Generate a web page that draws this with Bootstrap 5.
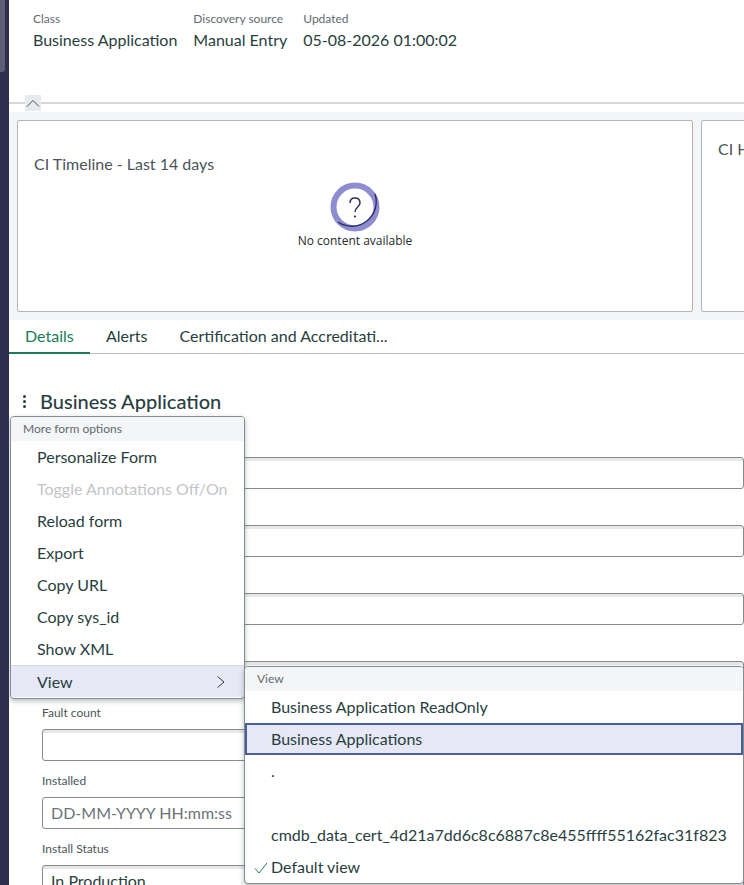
<!DOCTYPE html>
<html lang="en">
<head>
  <meta charset="UTF-8">
  <title>Business Application</title>
  <meta name="viewport" content="width=device-width, initial-scale=1" />
  <link href="https://cdn.jsdelivr.net/npm/bootstrap@5.3.0/dist/css/bootstrap.min.css" rel="stylesheet">
  <style>
    html, body { height: 885px; overflow: hidden; }
    body { font-family: "Lato", "Liberation Sans", sans-serif; color: #293e40; background: #fff; }
    .app-shell { position: relative; height: 885px; overflow: hidden; }
    .side-rail { width: 9px; flex: none; background: #2e2e4f; }
    .rail-thumb { width: 5px; height: 72px; background: #5d5d75; border-radius: 0 0 3px 0; }
    .main-area { flex: 1 1 auto; min-width: 0; overflow: hidden; }
    .summary-head { height: 102px; padding: 11px 0 0 24px; gap: 16px; }
    .sum-label { font-size: 12px; line-height: 16px; color: #5f6b70; }
    .sum-value { font-size: 16px; line-height: 24px; color: #293e40; margin-top: 1px; }
    .collapse-line { height: 10px; border-top: 2px solid #d5d8da; position: relative; }
    .collapse-btn { position: absolute; left: 16px; top: -9px; width: 16px; height: 16px; background: #e8e9ec; display: flex; }
    .widget-band { background: #f4f5f7; height: 208px; padding: 8px 0 0 8px; gap: 8px; }
    .widget-box { flex: none; width: 676px; height: 192px; background: #fff; border: 1px solid #b1b5b8; border-radius: 2px; padding: 33px 16px 0; position: relative; }
    .widget-title { font-size: 16px; line-height: 20px; color: #4a5558; white-space: nowrap; }
    .no-content { font-size: 12px; line-height: 16px; color: #1f2a2c; font-family: "Open Sans", sans-serif; margin-top: 9px; }
    .tab-strip { height: 34px; border-bottom: 1px solid #bcc0c3; }
    .tab-item { font-size: 16px; line-height: 32px; color: #293e40; padding: 0 16px; white-space: nowrap; height: 34px; }
    .tab-item.is-active { color: #1b7a5a; border-bottom: 2px solid #1b7a5a; width: 81px; }
    .form-head { padding: 33px 0 0 14px; gap: 14px; height: 78px; }
    .form-title { font-size: 20px; line-height: 28px; font-weight: 500; color: #293e40; margin: 0; white-space: nowrap; }
    .dot-stack { display: flex; flex-direction: column; gap: 2px; padding-top: 8px; }
    .dot-stack i { width: 3px; height: 3px; background: #293e40; border-radius: 50%; display: block; }
    .form-body { padding: 0 0 0 33px; }
    .field-row { height: 68px; position: relative; }
    .field-label { position: absolute; left: 0; top: -24px; font-size: 12px; line-height: 16px; color: #4a5558; }
    .field-box { height: 32px; border: 1px solid #868b8e; border-radius: 3px; font-size: 16px; line-height: 30px; padding: 0 8px; color: #293e40; background: #fff; }
    .field-box.is-ro { background: linear-gradient(#e6e8ea 3px, #fff 3px); }
    .field-box.is-hint { color: #6b7376; box-shadow: none; }
    .fly-menu { position: absolute; background: #fff; border: 1px solid #868b8e; border-radius: 4px; box-shadow: 0 2px 5px rgba(41,62,64,.35); overflow: hidden; }
    .menu-main { left: 10px; top: 416px; width: 235px; height: 283px; }
    .menu-view { left: 244px; top: 666px; width: 500px; height: 218px; }
    .menu-cap { background: #f4f5f7; height: 24px; font-size: 12px; line-height: 24px; color: #5f6b70; padding-left: 12px; }
    .menu-row { height: 32px; font-size: 16px; line-height: 32px; color: #293e40; padding-left: 26px; white-space: nowrap; position: relative; }
    .menu-row.is-off { color: #c2c5c7; }
    .menu-row.is-open { background: #e6e8f5; border-top: 1px solid #d5d8da; }
    .menu-row.is-focus { background: #e6e8f5; outline: 2px solid #4a5f9a; outline-offset: -2px; }
    .menu-view .menu-row { padding-left: 26px; }
    .row-mark { position: absolute; }
  </style>
</head>
<body>
  <div class="app-shell d-flex">
    <div class="side-rail"><div class="rail-thumb"></div></div>
    <div class="main-area">

      <!-- Summary -->
      <div class="summary-head d-flex">
        <div>
          <div class="sum-label">Class</div>
          <div class="sum-value">Business Application</div>
        </div>
        <div>
          <div class="sum-label">Discovery source</div>
          <div class="sum-value">Manual Entry</div>
        </div>
        <div>
          <div class="sum-label">Updated</div>
          <div class="sum-value">05-08-2026 01:00:02</div>
        </div>
      </div>
      <div class="collapse-line">
        <span class="collapse-btn">
          <svg width="16" height="16" viewBox="0 0 16 16" fill="none" stroke="#4a5558" stroke-width="1"><path d="M2 11.5 8 5.5l6 6"/></svg>
        </span>
      </div>

      <!-- Widgets -->
      <div class="widget-band d-flex">
        <div class="widget-box">
          <div class="widget-title">CI Timeline - Last 14 days</div>
          <div class="d-flex flex-column align-items-center">
            <svg class="mt-2" width="52" height="52" viewBox="0 0 52 52">
              <circle cx="26" cy="25" r="21.5" fill="#fff" stroke="#8d8dcf" stroke-width="6"/>
              <path d="M9 40A24.5 24.5 0 0 0 46 12" fill="none" stroke="#2e2e6a" stroke-width="1.4"/>
              <path d="M21 21c0-3 2-5 5-5s5 2 5 5c0 4-5 4-5 9" fill="none" stroke="#2e2e4f" stroke-width="1.5"/>
              <circle cx="26" cy="34.5" r="1.1" fill="#2e2e4f"/>
            </svg>
            <div class="no-content" style="margin-top:-1px">No content available</div>
          </div>
        </div>
        <div class="widget-box">
          <div class="widget-title" style="margin-top:-15px">CI Health</div>
        </div>
      </div>

      <!-- Tabs -->
      <div class="tab-strip d-flex">
        <div class="tab-item is-active">Details</div>
        <div class="tab-item">Alerts</div>
        <div class="tab-item">Certification and Accreditati...</div>
      </div>

      <!-- Form -->
      <div class="form-head d-flex">
        <span class="dot-stack"><i></i><i></i><i></i></span>
        <h2 class="form-title">Business Application</h2>
      </div>
      <div class="form-body" style="margin-top:25px">
        <div class="field-row"><div class="field-box is-ro"></div></div>
        <div class="field-row"><div class="field-box is-ro"></div></div>
        <div class="field-row"><div class="field-box is-ro"></div></div>
        <div class="field-row"><div class="field-box is-ro"></div></div>
        <div class="field-row"><div class="field-label">Fault count</div><div class="field-box is-ro"></div></div>
        <div class="field-row"><div class="field-label">Installed</div><div class="field-box is-hint">DD-MM-YYYY HH:mm:ss</div></div>
        <div class="field-row"><div class="field-label">Install Status</div><div class="field-box is-ro">In Production</div></div>
      </div>
    </div>

    <!-- More form options -->
    <div class="fly-menu menu-main">
      <div class="menu-cap">More form options</div>
      <div class="menu-row">Personalize Form</div>
      <div class="menu-row is-off">Toggle Annotations Off/On</div>
      <div class="menu-row">Reload form</div>
      <div class="menu-row">Export</div>
      <div class="menu-row">Copy URL</div>
      <div class="menu-row">Copy sys_id</div>
      <div class="menu-row">Show XML</div>
      <div class="menu-row is-open">View
        <svg class="row-mark" style="right:18px;top:9px" width="10" height="14" viewBox="0 0 10 14" fill="none" stroke="#293e40"><path d="M1.5 1.5 8 7l-6.5 5.5"/></svg>
      </div>
    </div>

    <!-- View submenu -->
    <div class="fly-menu menu-view">
      <div class="menu-cap">View</div>
      <div class="menu-row">Business Application ReadOnly</div>
      <div class="menu-row is-focus">Business Applications</div>
      <div class="menu-row">.</div>
      <div class="menu-row"></div>
      <div class="menu-row">cmdb_data_cert_4d21a7dd6c8c6887c8e455ffff55162fac31f823</div>
      <div class="menu-row">
        <svg class="row-mark" style="left:9px;top:10px" width="14" height="14" viewBox="0 0 14 14" fill="none" stroke="#1b7a5a"><path d="M1 7.5 5 12l8-10"/></svg>
        Default view
      </div>
    </div>
  </div>
  <script src="https://cdn.jsdelivr.net/npm/bootstrap@5.3.0/dist/js/bootstrap.bundle.min.js"></script>
</body>
</html>
